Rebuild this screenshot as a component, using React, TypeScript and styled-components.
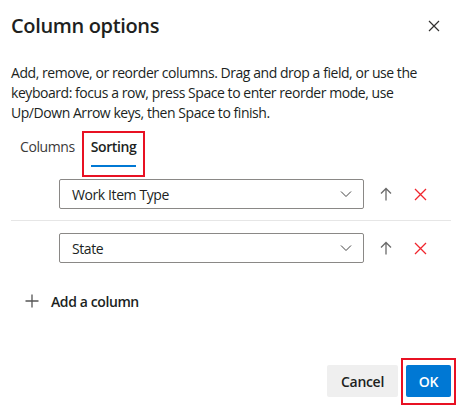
import React from "react";
import styled, { createGlobalStyle } from "styled-components";

const GlobalStyle = createGlobalStyle`
  html, body {
    margin: 0;
    padding: 0;
    background: #ffffff;
  }
  body {
    font-family: "Open Sans", "Noto Sans", "Liberation Sans", sans-serif;
    color: #201f1e;
  }
`;

const sortFields = ["Work Item Type", "State"];

export default function App() {
  return (
    <>
      <GlobalStyle />
      <Dialog>
        <Header>
          <Title>Column options</Title>
          <CloseButton aria-label="Close">
            <svg width="12" height="12" viewBox="0 0 12 12">
              <path d="M1 1 L11 11 M11 1 L1 11" stroke="#323130" strokeWidth="1.2" />
            </svg>
          </CloseButton>
        </Header>
        <Description>
          Add, remove, or reorder columns. Drag and drop a field, or use the
          keyboard: focus a row, press Space to enter reorder mode, use
          Up/Down Arrow keys, then Space to finish.
        </Description>
        <TabBar>
          <Tab>Columns</Tab>
          <Tab $active>
            Sorting
            <Highlight $bottom={-10} $side={-1} />
          </Tab>
        </TabBar>
        <SortList>
          {sortFields.map((field) => (
            <SortRow key={field}>
              <Dropdown>
                <span>{field}</span>
                <svg width="12" height="8" viewBox="0 0 12 8">
                  <path d="M1 1.5 L6 6.5 L11 1.5" fill="none" stroke="#444" strokeWidth="1" />
                </svg>
              </Dropdown>
              <IconButton aria-label="Move up">
                <svg width="12" height="14" viewBox="0 0 12 14">
                  <path d="M6 13.5 V1.5 M1 6.5 L6 1.5 L11 6.5" fill="none" stroke="#6a6a6a" strokeWidth="1.3" />
                </svg>
              </IconButton>
              <IconButton aria-label="Remove">
                <svg width="13" height="13" viewBox="0 0 13 13">
                  <path d="M1 1 L12 12 M12 1 L1 12" stroke="#f0262e" strokeWidth="1.3" />
                </svg>
              </IconButton>
            </SortRow>
          ))}
        </SortList>
        <AddButton>
          <svg width="14" height="14" viewBox="0 0 14 14">
            <path d="M7 0.5 V13.5 M0.5 7 H13.5" stroke="#555" strokeWidth="1.3" />
          </svg>
          <span>Add a column</span>
        </AddButton>
        <Footer>
          <Button>Cancel</Button>
          <Button $primary>
            OK
            <Highlight $bottom={-8} $side={-5} $top={-7} />
          </Button>
        </Footer>
      </Dialog>
    </>
  );
}

const Dialog = styled.div`
  width: 464px;
  height: 410px;
  box-sizing: border-box;
  padding: 12px 13px 0 11px;
  display: flex;
  flex-direction: column;
`;

const Header = styled.div`
  display: flex;
  align-items: center;
  justify-content: space-between;
  height: 28px;
`;

const Title = styled.h1`
  margin: 0;
  font-size: 20px;
  font-weight: 600;
  line-height: 28px;
  letter-spacing: -0.35px;
`;

const CloseButton = styled.button`
  width: 32px;
  height: 32px;
  margin-right: 1px;
  border: none;
  background: transparent;
  display: flex;
  align-items: center;
  justify-content: center;
  padding: 0;
`;

const Description = styled.p`
  margin: 23px 0 0;
  font-size: 14px;
  line-height: 20px;
  letter-spacing: -0.45px;
  color: #201f1e;
`;

const TabBar = styled.div`
  display: flex;
  margin: 8px 0 0 1px;
  height: 36px;
`;

const Tab = styled.div<{ $active?: boolean }>`
  position: relative;
  padding: 0 8px 6px;
  display: flex;
  align-items: center;
  font-size: 14px;
  letter-spacing: -0.4px;
  font-weight: ${(p) => (p.$active ? 600 : 400)};
  color: ${(p) => (p.$active ? "#201f1e" : "#3b3a39")};

  &::after {
    content: "";
    display: ${(p) => (p.$active ? "block" : "none")};
    position: absolute;
    left: 8px;
    right: 8px;
    bottom: 0;
    height: 2px;
    background: #0078d4;
  }
`;

const Highlight = styled.span<{ $bottom: number; $side: number; $top?: number }>`
  position: absolute;
  top: ${(p) => p.$top ?? 0}px;
  left: ${(p) => p.$side}px;
  right: ${(p) => p.$side}px;
  bottom: ${(p) => p.$bottom}px;
  border: 2px solid #e81123;
  pointer-events: none;
`;

const SortList = styled.div`
  display: flex;
  flex-direction: column;
`;

const SortRow = styled.div`
  display: flex;
  align-items: center;
  padding: 12px 0 11px 48px;

  & + & {
    border-top: 1px solid #e6e6e6;
  }
`;

const Dropdown = styled.div`
  width: 305px;
  height: 30px;
  box-sizing: border-box;
  border: 1px solid #8a8886;
  border-radius: 2px;
  display: flex;
  align-items: center;
  justify-content: space-between;
  padding: 0 11px 0 12px;
  font-size: 14px;
  letter-spacing: -0.4px;
  color: #201f1e;
`;

const IconButton = styled.button`
  width: 32px;
  height: 30px;
  margin-left: 2px;
  border: none;
  background: transparent;
  padding: 0;
  display: flex;
  align-items: center;
  justify-content: center;

  &:first-of-type {
    margin-left: 6px;
  }
`;

const AddButton = styled.button`
  align-self: flex-start;
  margin-top: 11px;
  display: flex;
  align-items: center;
  gap: 12px;
  height: 32px;
  padding: 0 0 0 14px;
  border: none;
  background: transparent;
  font-family: inherit;
  font-size: 14px;
  font-weight: 600;
  letter-spacing: -0.4px;
  color: #201f1e;
`;

const Footer = styled.div`
  display: flex;
  justify-content: flex-end;
  gap: 8px;
  margin-top: 48px;
`;

const Button = styled.button<{ $primary?: boolean }>`
  position: relative;
  height: 32px;
  padding: 0 ${(p) => (p.$primary ? 12 : 14)}px;
  min-width: ${(p) => (p.$primary ? 45 : 68)}px;
  border: none;
  border-radius: 2px;
  font-family: inherit;
  font-size: 14px;
  font-weight: 600;
  letter-spacing: -0.3px;
  background: ${(p) => (p.$primary ? "#0078d4" : "#efefef")};
  color: ${(p) => (p.$primary ? "#ffffff" : "#201f1e")};
`;
